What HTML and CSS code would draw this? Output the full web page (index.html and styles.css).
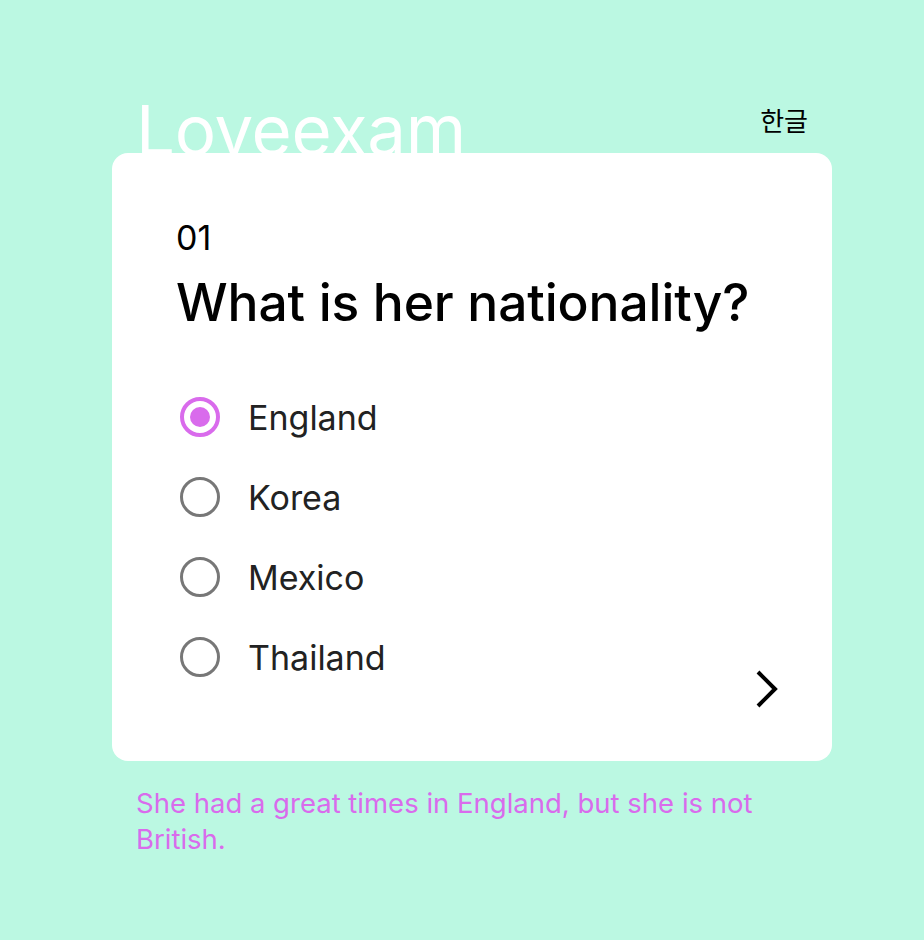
FILE: index.html
```html
<!DOCTYPE html>
<html lang="en">
<head>
<meta charset="utf-8">
<title>Loveexam</title>
<link rel="stylesheet" href="styles.css">
</head>
<body>
<main class="page">
  <header class="header">
    <h1 class="logo">Loveexam</h1>
    <button class="lang" type="button">한글</button>
  </header>
  <section class="card">
    <div class="qnum">01</div>
    <h2 class="question">What is her nationality?</h2>
    <ul class="options">
      <li class="option selected"><span class="radio"></span><span class="label">England</span></li>
      <li class="option"><span class="radio"></span><span class="label">Korea</span></li>
      <li class="option"><span class="radio"></span><span class="label">Mexico</span></li>
      <li class="option"><span class="radio"></span><span class="label">Thailand</span></li>
    </ul>
    <div class="card-nav">
      <button class="next" type="button" aria-label="Next">
        <svg width="24" height="38" viewBox="0 0 24 38"><polyline points="3,2 20,19 3,36" fill="none" stroke="#000" stroke-width="4" stroke-linecap="butt" stroke-linejoin="miter"/></svg>
      </button>
    </div>
  </section>
  <p class="hint">She had a great times in England, but she is not British.</p>
</main>
</body>
</html>
```
FILE: styles.css
```css
* { box-sizing: border-box; }
html, body { margin: 0; padding: 0; }
body {
  background: #bbf8e2;
  font-family: Inter, "Noto Sans", "Noto Sans CJK KR", sans-serif;
  min-height: 940px;
}
.page {
  width: 720px;
  margin-left: 112px;
  padding-top: 98px;
}
.header {
  height: 55px;
  display: flex;
  justify-content: space-between;
  align-items: flex-start;
  padding: 0 24px;
}
.logo {
  margin: 0;
  font-size: 69px;
  line-height: 64px;
  font-weight: 400;
  color: #fff;
  letter-spacing: -0.3px;
}
.lang {
  margin-top: 6px;
  border: 0;
  background: none;
  padding: 0;
  font-family: "Noto Sans CJK KR", sans-serif;
  font-size: 26px;
  line-height: 32px;
  color: #000;
}
.card {
  position: relative;
  background: #fff;
  border-radius: 16px;
  padding: 65px 53px 53px 64px;
}
.qnum {
  font-size: 34px;
  line-height: 40px;
  color: #000;
}
.question {
  margin: 13px 0 0;
  font-size: 51.5px;
  line-height: 62px;
  font-weight: 500;
  color: #000;
  letter-spacing: -0.1px;
}
.options {
  list-style: none;
  margin: 44px 0 0;
  padding: 0 0 0 4px;
}
.option {
  height: 80px;
  display: flex;
  align-items: center;
  gap: 28px;
}
.radio {
  width: 40px;
  height: 40px;
  border-radius: 50%;
  border: 3px solid #777;
  flex: none;
  display: flex;
  align-items: center;
  justify-content: center;
}
.selected .radio {
  border: 4px solid #d96bec;
}
.selected .radio::after {
  content: "";
  width: 20px;
  height: 20px;
  border-radius: 50%;
  background: #d96bec;
}
.label {
  font-size: 34px;
  color: #222;
}
.card-nav {
  display: flex;
  justify-content: flex-end;
  margin-top: -27px;
}
.next {
  border: 0;
  background: none;
  padding: 0;
  width: 24px;
  height: 38px;
  display: block;
}
.next svg { display: block; }
.hint {
  margin: 24px 0 0;
  padding: 0 24px;
  font-size: 27.5px;
  line-height: 36px;
  color: #d96bec;
}
```
